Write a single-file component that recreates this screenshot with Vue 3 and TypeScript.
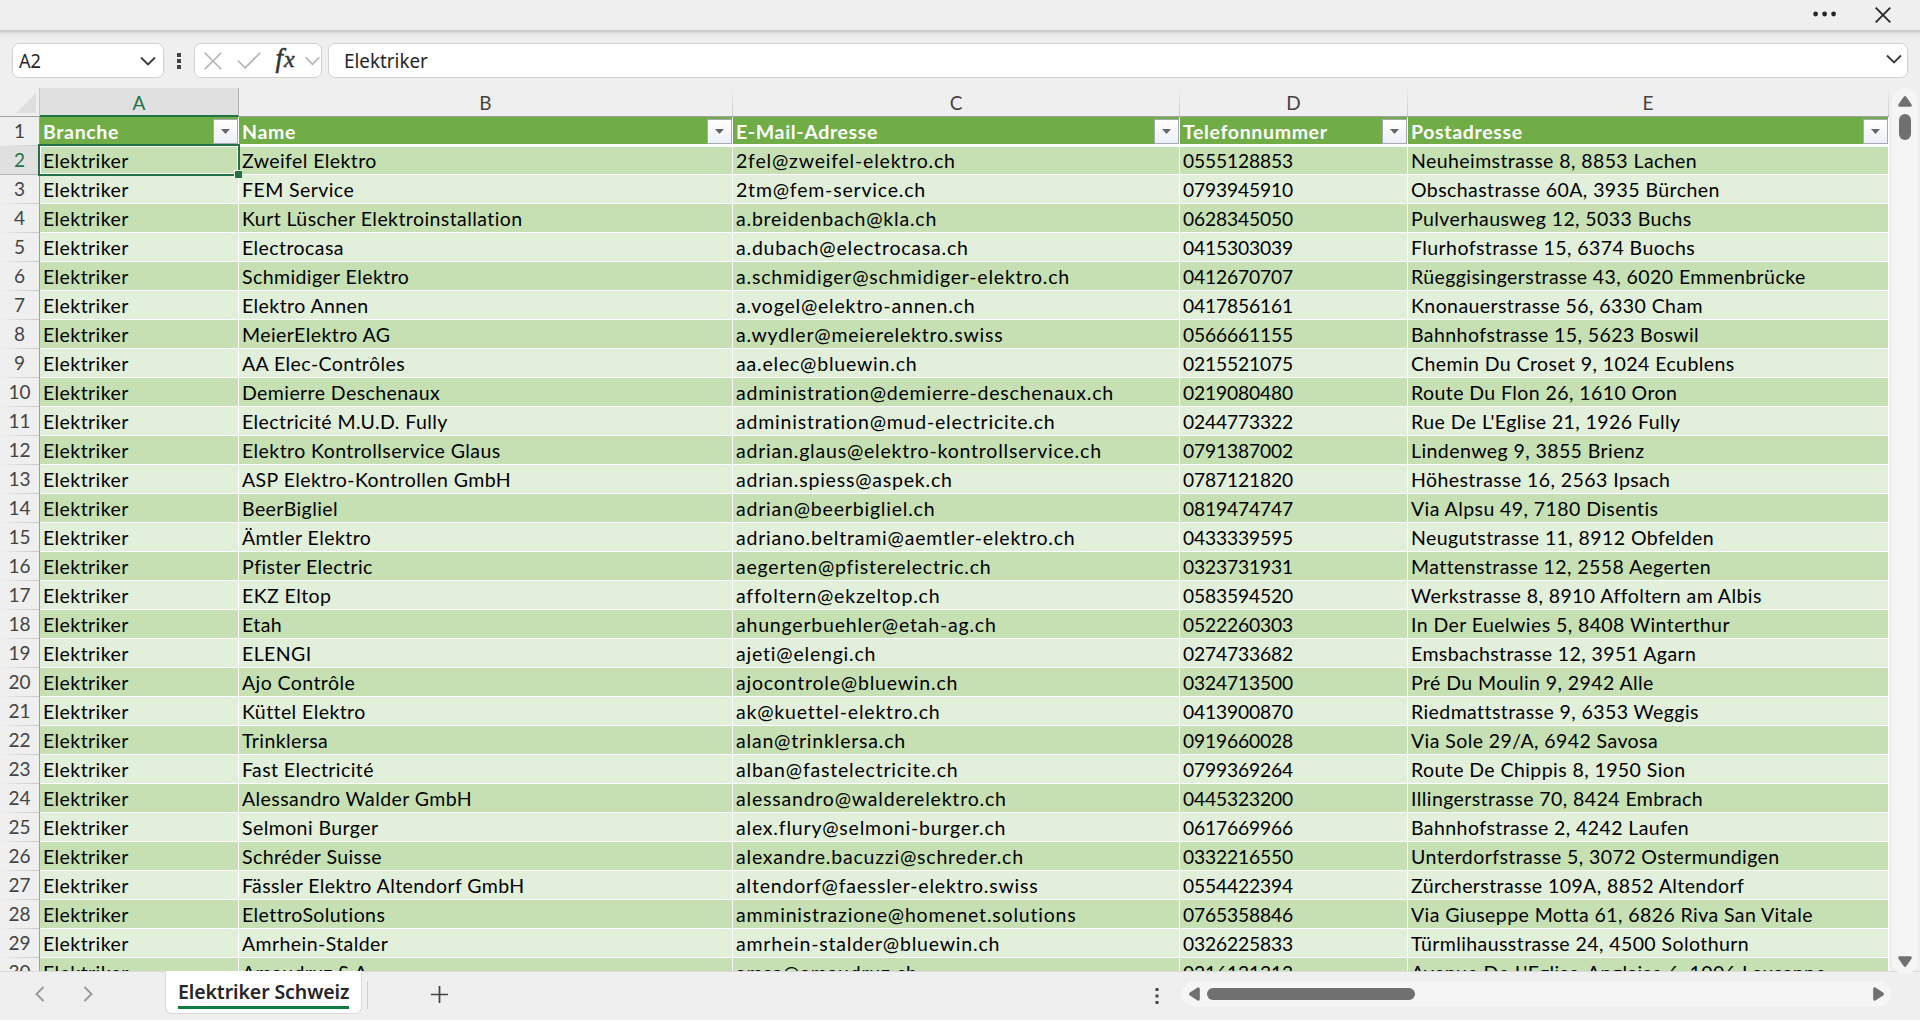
<script setup lang="ts">
interface Column { letter: string; title: string; width: number }

const columns: Column[] = [
  { letter: 'A', title: 'Branche', width: 199 },
  { letter: 'B', title: 'Name', width: 494 },
  { letter: 'C', title: 'E-Mail-Adresse', width: 447 },
  { letter: 'D', title: 'Telefonnummer', width: 228 },
  { letter: 'E', title: 'Postadresse', width: 481 },
]

const branch = 'Elektriker'
const entries: string[][] = [
  ['Zweifel Elektro', '2fel@zweifel-elektro.ch', '0555128853', 'Neuheimstrasse 8, 8853 Lachen'],
  ['FEM Service', '2tm@fem-service.ch', '0793945910', 'Obschastrasse 60A, 3935 Bürchen'],
  ['Kurt Lüscher Elektroinstallation', 'a.breidenbach@kla.ch', '0628345050', 'Pulverhausweg 12, 5033 Buchs'],
  ['Electrocasa', 'a.dubach@electrocasa.ch', '0415303039', 'Flurhofstrasse 15, 6374 Buochs'],
  ['Schmidiger Elektro', 'a.schmidiger@schmidiger-elektro.ch', '0412670707', 'Rüeggisingerstrasse 43, 6020 Emmenbrücke'],
  ['Elektro Annen', 'a.vogel@elektro-annen.ch', '0417856161', 'Knonauerstrasse 56, 6330 Cham'],
  ['MeierElektro AG', 'a.wydler@meierelektro.swiss', '0566661155', 'Bahnhofstrasse 15, 5623 Boswil'],
  ['AA Elec-Contrôles', 'aa.elec@bluewin.ch', '0215521075', 'Chemin Du Croset 9, 1024 Ecublens'],
  ['Demierre Deschenaux', 'administration@demierre-deschenaux.ch', '0219080480', 'Route Du Flon 26, 1610 Oron'],
  ['Electricité M.U.D. Fully', 'administration@mud-electricite.ch', '0244773322', "Rue De L'Eglise 21, 1926 Fully"],
  ['Elektro Kontrollservice Glaus', 'adrian.glaus@elektro-kontrollservice.ch', '0791387002', 'Lindenweg 9, 3855 Brienz'],
  ['ASP Elektro-Kontrollen GmbH', 'adrian.spiess@aspek.ch', '0787121820', 'Höhestrasse 16, 2563 Ipsach'],
  ['BeerBigliel', 'adrian@beerbigliel.ch', '0819474747', 'Via Alpsu 49, 7180 Disentis'],
  ['Ämtler Elektro', 'adriano.beltrami@aemtler-elektro.ch', '0433339595', 'Neugutstrasse 11, 8912 Obfelden'],
  ['Pfister Electric', 'aegerten@pfisterelectric.ch', '0323731931', 'Mattenstrasse 12, 2558 Aegerten'],
  ['EKZ Eltop', 'affoltern@ekzeltop.ch', '0583594520', 'Werkstrasse 8, 8910 Affoltern am Albis'],
  ['Etah', 'ahungerbuehler@etah-ag.ch', '0522260303', 'In Der Euelwies 5, 8408 Winterthur'],
  ['ELENGI', 'ajeti@elengi.ch', '0274733682', 'Emsbachstrasse 12, 3951 Agarn'],
  ['Ajo Contrôle', 'ajocontrole@bluewin.ch', '0324713500', 'Pré Du Moulin 9, 2942 Alle'],
  ['Küttel Elektro', 'ak@kuettel-elektro.ch', '0413900870', 'Riedmattstrasse 9, 6353 Weggis'],
  ['Trinklersa', 'alan@trinklersa.ch', '0919660028', 'Via Sole 29/A, 6942 Savosa'],
  ['Fast Electricité', 'alban@fastelectricite.ch', '0799369264', 'Route De Chippis 8, 1950 Sion'],
  ['Alessandro Walder GmbH', 'alessandro@walderelektro.ch', '0445323200', 'Illingerstrasse 70, 8424 Embrach'],
  ['Selmoni Burger', 'alex.flury@selmoni-burger.ch', '0617669966', 'Bahnhofstrasse 2, 4242 Laufen'],
  ['Schréder Suisse', 'alexandre.bacuzzi@schreder.ch', '0332216550', 'Unterdorfstrasse 5, 3072 Ostermundigen'],
  ['Fässler Elektro Altendorf GmbH', 'altendorf@faessler-elektro.swiss', '0554422394', 'Zürcherstrasse 109A, 8852 Altendorf'],
  ['ElettroSolutions', 'amministrazione@homenet.solutions', '0765358846', 'Via Giuseppe Motta 61, 6826 Riva San Vitale'],
  ['Amrhein-Stalder', 'amrhein-stalder@bluewin.ch', '0326225833', 'Türmlihausstrasse 24, 4500 Solothurn'],
  ['Amaudruz S.A.', 'amsa@amaudruz.ch', '0216131313', "Avenue De L'Eglise-Anglaise 6, 1006 Lausanne"],
]
</script>

<template>
  <div class="app">
    <header class="titlebar">
      <svg class="more" width="24" height="6" viewBox="0 0 24 6"><circle cx="2.6" cy="3" r="2.4" /><circle cx="11.6" cy="3" r="2.4" /><circle cx="20.6" cy="3" r="2.4" /></svg>
      <svg class="close" width="16" height="16" viewBox="0 0 16 16"><path d="M.7.7 15.3 15.3M15.3.7.7 15.3" /></svg>
    </header>

    <div class="formula-row">
      <div class="box name-box">
        <span>A2</span>
        <svg class="chev" width="16" height="10" viewBox="0 0 16 10"><path d="M1 1.5 8 8.5 15 1.5" /></svg>
      </div>
      <svg class="grip" width="4" height="16" viewBox="0 0 4 16"><path d="M0 0h4v4H0zM0 6h4v4H0zM0 12h4v4H0z" /></svg>
      <div class="box tools">
        <svg width="18" height="18" viewBox="0 0 18 18"><path d="M.7.7 17.3 17.3M17.3.7.7 17.3" /></svg>
        <svg class="check" width="24" height="17" viewBox="0 0 24 17"><path d="M.7 8.5 8.2 15.8 23.3.7" /></svg>
        <span class="fx"><i>f</i><i class="x">x</i></span>
        <svg width="15" height="10" viewBox="0 0 15 10"><path d="M.7 1.3 7.5 8.3 14.3 1.3" /></svg>
      </div>
      <div class="box formula">
        <span>Elektriker</span>
        <svg class="chev" width="16" height="10" viewBox="0 0 16 10"><path d="M1 1.5 8 8.5 15 1.5" /></svg>
      </div>
    </div>

    <main class="body">
      <div class="sheet">
        <div class="col-heads">
          <div class="corner"><svg width="20" height="20" viewBox="0 0 20 20"><path d="M20 0V20H0z" /></svg></div>
          <div v-for="(c, i) in columns" :key="c.letter" class="col-head" :class="{ active: i === 0 }" :style="{ width: c.width + 'px' }">{{ c.letter }}</div>
        </div>
        <div class="row head">
          <div class="num">1</div>
          <div v-for="c in columns" :key="c.letter" class="cell" :style="{ width: c.width + 'px' }">
            <span>{{ c.title }}</span>
            <span class="filter"><svg width="9" height="5" viewBox="0 0 9 5"><path d="M0 0H9L4.5 5z" /></svg></span>
          </div>
        </div>
        <div v-for="(e, r) in entries" :key="r" class="row" :class="{ dark: r % 2 === 0, first: r === 0 }">
          <div class="num">{{ r + 2 }}</div>
          <div v-for="(c, i) in columns" :key="c.letter" class="cell" :class="'col-' + c.letter" :style="{ width: c.width + 'px' }">
            <span>{{ i === 0 ? branch : e[i - 1] }}</span>
            <span v-if="r === 0 && i === 0" class="selection"><b class="handle"></b></span>
          </div>
        </div>
      </div>
      <div class="vscroll">
        <svg width="14" height="11" viewBox="0 0 14 11"><path d="M5.6.9Q7-.9 8.4.9L13.6 8.6Q14.4 10.8 12 10.8H2Q-.4 10.8.4 8.6z" /></svg>
        <div class="vthumb"></div>
        <svg class="down" width="14" height="11" viewBox="0 0 14 11"><path d="M5.6 10.1Q7 11.9 8.4 10.1L13.6 2.4Q14.4.2 12 .2H2Q-.4.2.4 2.4z" /></svg>
      </div>
    </main>

    <footer class="footer">
      <svg class="nav" width="10" height="16" viewBox="0 0 10 16"><path d="M8.5 1 1.5 8 8.5 15" /></svg>
      <svg class="nav next" width="10" height="16" viewBox="0 0 10 16"><path d="M1.5 1 8.5 8 1.5 15" /></svg>
      <div class="tab"><span>Elektriker Schweiz</span></div>
      <div class="divider"></div>
      <svg class="plus" width="17" height="17" viewBox="0 0 17 17"><path d="M8.5 0V17M0 8.5H17" /></svg>
      <svg class="grip small" width="4" height="16" viewBox="0 0 4 16"><path d="M.5 0h3v3h-3zM.5 6.5h3v3h-3zM.5 13h3v3h-3z" /></svg>
      <div class="hscroll">
        <svg width="11" height="14" viewBox="0 0 11 14"><path d="M.9 5.6Q-.9 7 .9 8.4L8.6 13.6Q10.8 14.4 10.8 12V2Q10.8-.4 8.6.4z" /></svg>
        <div class="hthumb"></div>
        <svg class="right" width="11" height="14" viewBox="0 0 11 14"><path d="M10.1 5.6Q11.9 7 10.1 8.4L2.4 13.6Q.2 14.4.2 12V2Q.2-.4 2.4.4z" /></svg>
      </div>
    </footer>
  </div>
</template>

<style>
body { margin: 0; background: #efefef; overflow: hidden; }
</style>

<style scoped>
.app { width: 1920px; height: 1020px; display: flex; flex-direction: column; background: #efefef; font-family: Lato, "Open Sans", sans-serif; overflow: hidden; }
.app * { box-sizing: border-box; }
svg { display: block; flex: none; }
.titlebar { height: 30px; flex: none; display: flex; align-items: flex-start; justify-content: flex-end; }
.more { margin: 11px 38px 0 0; fill: #262626; }
.close { margin: 7px 29px 0 0; fill: none; stroke: #262626; stroke-width: 1.8; }
.formula-row { height: 58px; flex: none; display: flex; padding: 13px 12px 0; background: linear-gradient(#cccccc 0, #cecece 2px, #e2e2e2 3px, #ebebeb 6px, #efefef 11px); }
.box { height: 35px; background: #fff; border: 1px solid #d1d1d1; border-radius: 7px; display: flex; align-items: center; font: 19.5px "Noto Sans", sans-serif; color: #262626; }
.name-box { width: 152px; justify-content: space-between; padding: 0 7px 0 6px; }
.name-box span, .formula span { display: block; transform-origin: left; transform: scaleX(.93); }
.formula span { transform: scaleX(.965); }
.chev { fill: none; stroke: #3b3b3b; stroke-width: 1.9; }
.grip { fill: #444; margin: 10px 13px 0; }
.tools { width: 128px; padding-left: 9px; }
.tools svg { fill: none; stroke: #b3b3b3; stroke-width: 1.6; }
.tools .check { margin-left: 15px; }
.fx { width: 24px; margin: -5px 8px 0 12px; font: 27px "Liberation Serif", serif; color: #333; display: flex; align-items: baseline; justify-content: center; }
.fx i { -webkit-text-stroke: .5px #333; }
.fx .x { font-size: 24px; margin-left: 1px; }
.formula { margin-left: 6px; flex: 1; justify-content: space-between; padding: 0 5px 0 15px; }
.formula .chev { margin-top: -4px; }
.body { height: 883px; flex: none; display: flex; }
.sheet { width: 1889px; height: 883px; overflow: hidden; }
.col-heads { height: 29px; display: flex; border-bottom: 1px solid #a0a0a0; }
.corner { width: 40px; display: flex; padding: 5px 0 0 16px; border-right: 1px solid #c6c6c6; }
.corner svg { fill: #dedede; }
.col-head { height: 28px; padding-top: 1px; line-height: 27px; font-size: 19px; text-align: center; color: #444; border-right: 1px solid; border-image: linear-gradient(#efefef, #c9c9c9) 1; }
.col-head.active { height: 29px; background: #e0e0e0; color: #217346; border-image: none; border-right-color: #b3b3b3; border-bottom: 2px solid #217346; position: relative; }
.row { display: flex; height: 29px; }
.num { width: 40px; height: 29px; text-align: center; line-height: 28px; font-size: 19px; color: #444; border-right: 1px solid #a0a0a0; background: linear-gradient(90deg, #efefef, #c8c8c8) bottom / 39px 1px no-repeat; }
.first .num { background: linear-gradient(#b4b4b4, #b4b4b4) bottom / 39px 1px no-repeat, #e0e0e0; color: #217346; }
.cell { height: 29px; padding: 0 3px; line-height: 29px; font-size: 19.5px; letter-spacing: .42px; color: #000; white-space: nowrap; background: #e2efda; border-right: 1px solid #fff; border-bottom: 1px solid #fff; position: relative; }
.col-C { letter-spacing: .8px; }
.col-D { font-size: 19.2px; letter-spacing: -.12px; }
.dark .cell { background: #c6e0b4; }
.head .cell { background: #70ad47; color: #fff; font-weight: 700; letter-spacing: .65px; display: flex; justify-content: space-between; border-bottom: 2px solid #fff; padding-right: 0; }
.first .cell { border-top: 1px solid #fff; line-height: 28px; }
.filter { width: 25px; height: 25px; margin-top: 2px; background: linear-gradient(#fff, #eceff7); border: 1px solid #a5a9b3; display: flex; align-items: center; justify-content: center; }
.filter svg { fill: #666; }
.selection { position: absolute; left: -2px; top: -3px; width: 202px; height: 32px; border: 2px solid #217346; box-shadow: inset 0 0 0 1px #fff; z-index: 2; }
.handle { position: absolute; right: -4px; bottom: -4px; width: 8px; height: 8px; background: #217346; border: solid #fff; border-width: 1px 0 0 1px; }
.vscroll { width: 26px; height: 886px; margin-left: 3px; border-radius: 13px; background: #f5f5f5; display: flex; flex-direction: column; align-items: center; padding: 8px 0 7px; z-index: 1; }
.vscroll svg, .hscroll svg { fill: #707070; }
.vthumb { width: 12px; height: 26px; border-radius: 6px; background: #707070; margin-top: 7px; }
.down { margin-top: auto; }
.footer { height: 49px; flex: none; display: flex; border-top: 1px solid #dadada; align-items: flex-start; }
.nav { margin: 14px 0 0 35px; fill: none; stroke: #999; stroke-width: 1.9; }
.nav.next { margin-left: 38px; }
.tab { width: 197px; height: 43px; margin: -1px 0 0 72px; background: #fff; border: 1px solid #dadada; border-top: 0; border-radius: 0 0 7px 7px; padding: 6px 12px 0; }
.tab span { display: block; width: 171px; height: 32px; font: 600 19.5px/29px "Noto Sans", sans-serif; letter-spacing: -.1px; color: #262626; border-bottom: 3px solid #107c41; white-space: nowrap; }
.divider { width: 1px; height: 28px; margin: 9px 0 0 5px; background: #cfcfcf; }
.plus { margin: 14px 0 0 63px; stroke: #444; stroke-width: 1.7; fill: none; }
.grip.small { margin: 16px 0 0 707px; }
.hscroll { width: 709px; height: 26px; margin: 9px 0 0 23px; border-radius: 13px; background: #f5f5f5; display: flex; align-items: center; padding: 0 7px; }
.hthumb { width: 208px; height: 12px; border-radius: 6px; background: #707070; margin-left: 7px; }
.right { margin-left: auto; }
</style>
